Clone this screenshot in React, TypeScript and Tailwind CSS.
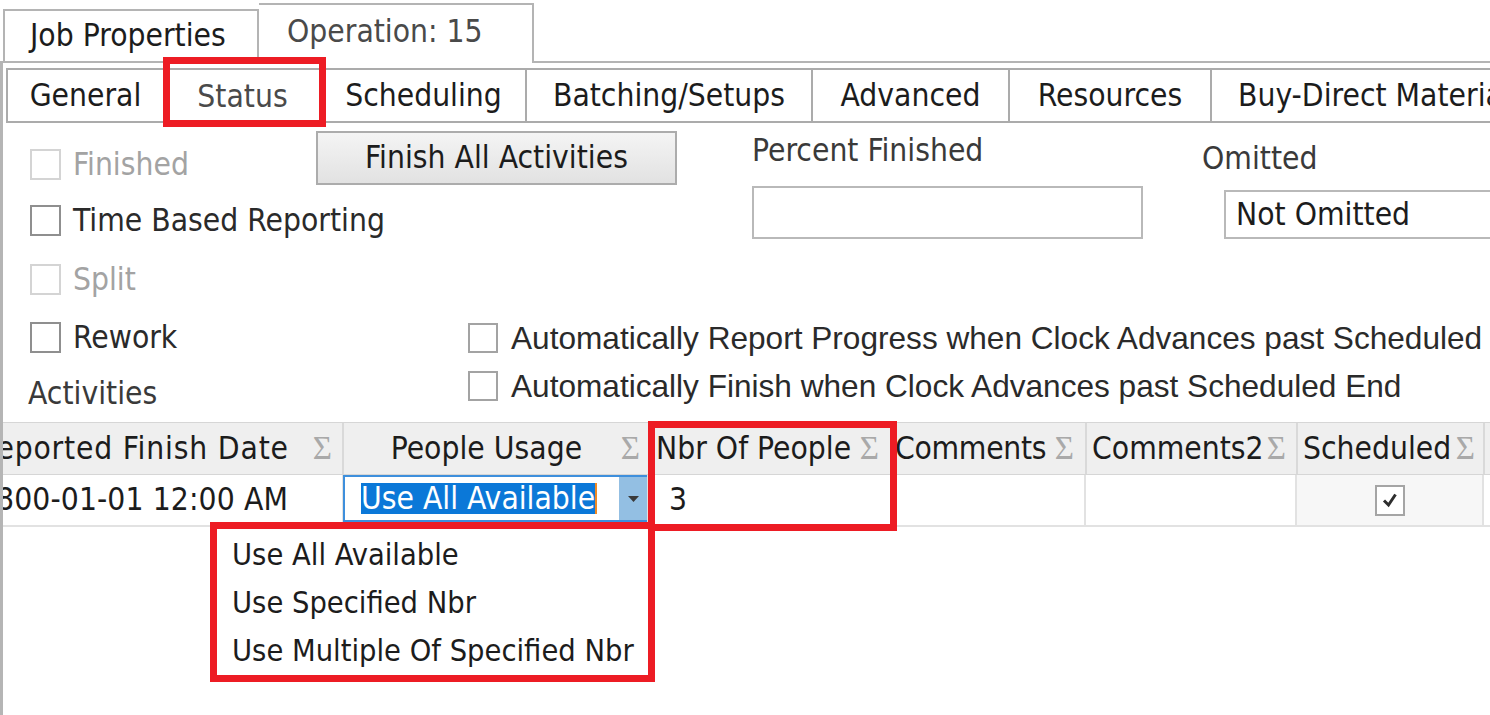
const FONT = "font-['DejaVu_Sans_Condensed','DejaVu_Sans',sans-serif] font-stretch-condensed";

const INNER_TABS = [
  { label: "General", w: "w-[159px]", active: false },
  { label: "Status", w: "w-[157px]", active: true },
  { label: "Scheduling", w: "w-[205px]", active: false },
  { label: "Batching/Setups", w: "w-[286px]", active: false },
  { label: "Advanced", w: "w-[197px]", active: false },
  { label: "Resources", w: "w-[202px]", active: false },
  { label: "Buy-Direct Materials", w: "w-[300px]", active: false },
];

function Box({ disabled = false }: { disabled?: boolean }) {
  return (
    <div
      className={
        disabled
          ? "w-[31px] h-[31px] shrink-0 border-2 border-[#d4d4d4] bg-white"
          : "w-[31px] h-[31px] shrink-0 border-2 border-[#8f8f8f] bg-white"
      }
    />
  );
}

function Check({ label, disabled = false }: { label: string; disabled?: boolean }) {
  return (
    <div className="flex items-center gap-[12px] h-[32px]">
      <Box disabled={disabled} />
      <span className={disabled ? "text-[#a3a3a3] leading-[32px] whitespace-nowrap" : "text-[#2a2a2a] leading-[32px] whitespace-nowrap"}>
        {label}
      </span>
    </div>
  );
}

function AutoCheck({ label }: { label: string }) {
  return (
    <div className="flex items-center gap-[13px] h-[32px]">
      <div className="w-[30px] h-[30px] shrink-0 border-2 border-[#a3a3a3] bg-white" />
      <span className="font-['Liberation_Sans',Arial,sans-serif] font-stretch-normal text-[31.6px] leading-[32px] text-[#2a2a2a] whitespace-nowrap">
        {label}
      </span>
    </div>
  );
}

function Sigma() {
  return <span className="font-['Liberation_Serif',serif] text-[33px] leading-none text-[#a9a9a9] shrink-0">Σ</span>;
}

export default function App() {
  return (
    <div className={`relative w-[1490px] h-[715px] overflow-hidden bg-white text-[31.5px] text-[#1c1c1c] ${FONT}`}>
      {/* outer tabs */}
      <div className="flex items-end h-[63px]">
        <div className="w-[3px] h-[2px] bg-[#b4b4b4]" />
        <div className="w-[256px] h-[54px] shrink-0 border-2 border-[#b4b4b4] bg-white pl-[25px] flex items-center leading-none whitespace-nowrap">
          Job Properties
        </div>
        <div className="w-[275px] h-[60px] shrink-0 border-2 border-b-0 border-l-0 border-[#b4b4b4] bg-white pl-[28px] pb-[4px] flex items-center leading-none text-[#4a4a4a] whitespace-nowrap">
          Operation: 15
        </div>
        <div className="flex-1 h-[2px] bg-[#b4b4b4]" />
      </div>

      {/* content panel */}
      <div className="h-[652px] border-l-[3px] border-[#b5b5b5]">
        {/* inner tabs */}
        <div className="flex pt-[5px] pl-[3px] h-[60px]">
          {INNER_TABS.map((t, i) => (
            <div
              key={t.label}
              className={[
                t.w,
                "h-[55px] shrink-0 flex items-center whitespace-nowrap overflow-hidden border-t-2 border-r-2 border-[#ababab]",
                i === 0 ? "border-l-2" : "",
                i === INNER_TABS.length - 1 ? "justify-start pl-[26px]" : "justify-center",
                t.active ? "bg-white text-[#4a4a4a] border-b-0" : "border-b-2",
              ].join(" ")}
            >
              {t.label}
            </div>
          ))}
        </div>

        {/* row 1 */}
        <div className="flex items-start h-[62px]">
          <div className="ml-[27px] mt-[25px] w-[286px] shrink-0">
            <Check label="Finished" disabled />
          </div>
          <div className="mt-[8px] w-[361px] h-[54px] shrink-0 border-2 border-[#acacac] bg-gradient-to-b from-[#f4f4f4] to-[#e2e2e2] flex items-center justify-center whitespace-nowrap">
            Finish All Activities
          </div>
          <div className="ml-[75px] mt-[11px] w-[450px] shrink-0 leading-[32px] text-[#3a3a3a] whitespace-nowrap">Percent Finished</div>
          <div className="mt-[19px] leading-[32px] text-[#3a3a3a] whitespace-nowrap">Omitted</div>
        </div>

        {/* row 2 */}
        <div className="flex items-start h-[55px]">
          <div className="ml-[27px] mt-[19px] w-[722px] shrink-0">
            <Check label="Time Based Reporting" />
          </div>
          <div className="mt-[1px] w-[391px] h-[53px] shrink-0 border-2 border-[#b9b9b9] bg-white" />
          <div className="ml-[81px] mt-[5px] w-[300px] h-[49px] shrink-0 border-2 border-[#b9b9b9] bg-white pl-[10px] flex items-center whitespace-nowrap">
            Not Omitted
          </div>
        </div>

        {/* row 3 */}
        <div className="flex items-start h-[68px]">
          <div className="ml-[27px] mt-[23px]">
            <Check label="Split" disabled />
          </div>
        </div>

        {/* row 4 */}
        <div className="flex items-start h-[54px]">
          <div className="ml-[27px] mt-[13px] w-[438px] shrink-0">
            <Check label="Rework" />
          </div>
          <div className="mt-[14px]">
            <AutoCheck label="Automatically Report Progress when Clock Advances past Scheduled End" />
          </div>
        </div>

        {/* row 5 */}
        <div className="flex items-start h-[60px]">
          <div className="ml-[25px] mt-[15px] w-[440px] shrink-0 leading-[32px] text-[#3a3a3a]">Activities</div>
          <div className="mt-[8px]">
            <AutoCheck label="Automatically Finish when Clock Advances past Scheduled End" />
          </div>
        </div>

        {/* grid header */}
        <div className="flex h-[53px] border-y border-[#d6d6d6] bg-[#efefef] whitespace-nowrap">
          <div className="w-[341px] shrink-0 overflow-hidden flex items-center justify-end pr-[10px] border-r-2 border-[#d9d9d9]">
            <span className="shrink-0 tracking-[0.8px]">Reported Finish Date</span>
            <span className="ml-[24px] flex"><Sigma /></span>
          </div>
          <div className="w-[306px] shrink-0 flex items-center pr-[8px] border-r-2 border-[#d9d9d9]">
            <span className="flex-1 text-center pl-[8px]">People Usage</span>
            <Sigma />
          </div>
          <div className="w-[243px] shrink-0 flex items-center justify-between pl-[6px] pr-[12px] border-r-2 border-[#d9d9d9]">
            <span>Nbr Of People</span>
            <Sigma />
          </div>
          <div className="w-[194px] shrink-0 flex items-center justify-between pl-[2px] pr-[11px] border-r-2 border-[#d9d9d9]">
            <span className="tracking-[-0.3px]">Comments</span>
            <Sigma />
          </div>
          <div className="w-[211px] shrink-0 flex items-center justify-between pl-[5px] pr-[10px] border-r-2 border-[#d9d9d9]">
            <span>Comments2</span>
            <Sigma />
          </div>
          <div className="w-[187px] shrink-0 flex items-center justify-between pl-[5px] pr-[8px] border-r-2 border-[#d9d9d9]">
            <span>Scheduled</span>
            <Sigma />
          </div>
          <div className="flex-1" />
        </div>

        {/* grid data row */}
        <div className="flex h-[52px] border-b-2 border-[#e2e2e2] whitespace-nowrap">
          <div className="w-[341px] shrink-0 overflow-hidden flex items-center justify-end pr-[54px] border-r-2 border-[#e2e2e2]">
            <span className="shrink-0 tracking-[0.1px]">1800-01-01 12:00 AM</span>
          </div>
          <div className="w-[306px] shrink-0 flex items-start -ml-[1px] border-r-2 border-[#e2e2e2]">
            <div className="w-[305px] h-[47px] flex border-2 border-r-0 border-[#3e8fdc] bg-white">
              <div className="flex-1 flex items-center pl-[16px]">
                <span className="bg-[#0b78d8] text-white leading-[31px] border-r-2 border-[#f08a24]">Use All Available</span>
              </div>
              <div className="w-[28px] bg-[#93bfe3] flex items-center justify-center">
                <svg width="11" height="6" viewBox="0 0 11 6">
                  <path d="M0 0 H11 L5.5 6 Z" fill="#3a3a3a" />
                </svg>
              </div>
            </div>
          </div>
          <div className="w-[243px] shrink-0 flex items-center pl-[20px] border-r-2 border-[#e2e2e2]">3</div>
          <div className="w-[194px] shrink-0 border-r-2 border-[#e2e2e2]" />
          <div className="w-[211px] shrink-0 border-r-2 border-[#e2e2e2]" />
          <div className="w-[187px] shrink-0 flex items-center justify-center bg-[#f7f7f7] border-r-2 border-[#e2e2e2]">
            <div className="w-[30px] h-[31px] border-2 border-[#a5a5a5] bg-white flex items-center justify-center">
              <svg width="20" height="20" viewBox="0 0 20 20">
                <path d="M4 10.5 L8.5 15 L15.5 4.5" fill="none" stroke="#2e2e2e" strokeWidth="3" />
              </svg>
            </div>
          </div>
          <div className="flex-1" />
        </div>
      </div>

      {/* dropdown list */}
      <div className="absolute left-[217px] top-[529px] w-[431px] h-[146px] bg-white flex flex-col pl-[15px] pt-[2px] text-[30.5px] whitespace-nowrap">
        <div className="h-[48px] leading-[48px]">Use All Available</div>
        <div className="h-[48px] leading-[48px]">Use Specified Nbr</div>
        <div className="h-[48px] leading-[48px]">Use Multiple Of Specified Nbr</div>
      </div>

      {/* red annotation boxes */}
      <div className="absolute left-[163px] top-[57px] w-[163px] h-[70px] border-[7px] border-[#ed1c24]" />
      <div className="absolute left-[648px] top-[421px] w-[249px] h-[110px] border-[7px] border-[#ed1c24]" />
      <div className="absolute left-[210px] top-[522px] w-[445px] h-[160px] border-[7px] border-[#ed1c24]" />
    </div>
  );
}
